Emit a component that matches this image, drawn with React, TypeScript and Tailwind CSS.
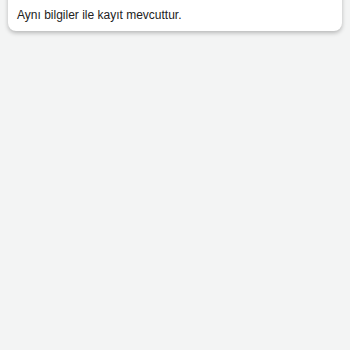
export default function App() {
  return (
    <div className="w-[350px] h-[350px] bg-[#f3f4f4] px-[8px] overflow-hidden" style={{ fontFamily: '"Liberation Sans", Arial, sans-serif' }}>
      <div className="-mt-[13px] bg-white rounded-[8px] pt-[18px] pb-[6px] px-[9px] shadow-[0_2px_4px_rgba(0,0,0,0.25)]">
        <p className="text-[12px] leading-[20px] text-[#222]">Aynı bilgiler ile kayıt mevcuttur.</p>
      </div>
    </div>
  );
}
